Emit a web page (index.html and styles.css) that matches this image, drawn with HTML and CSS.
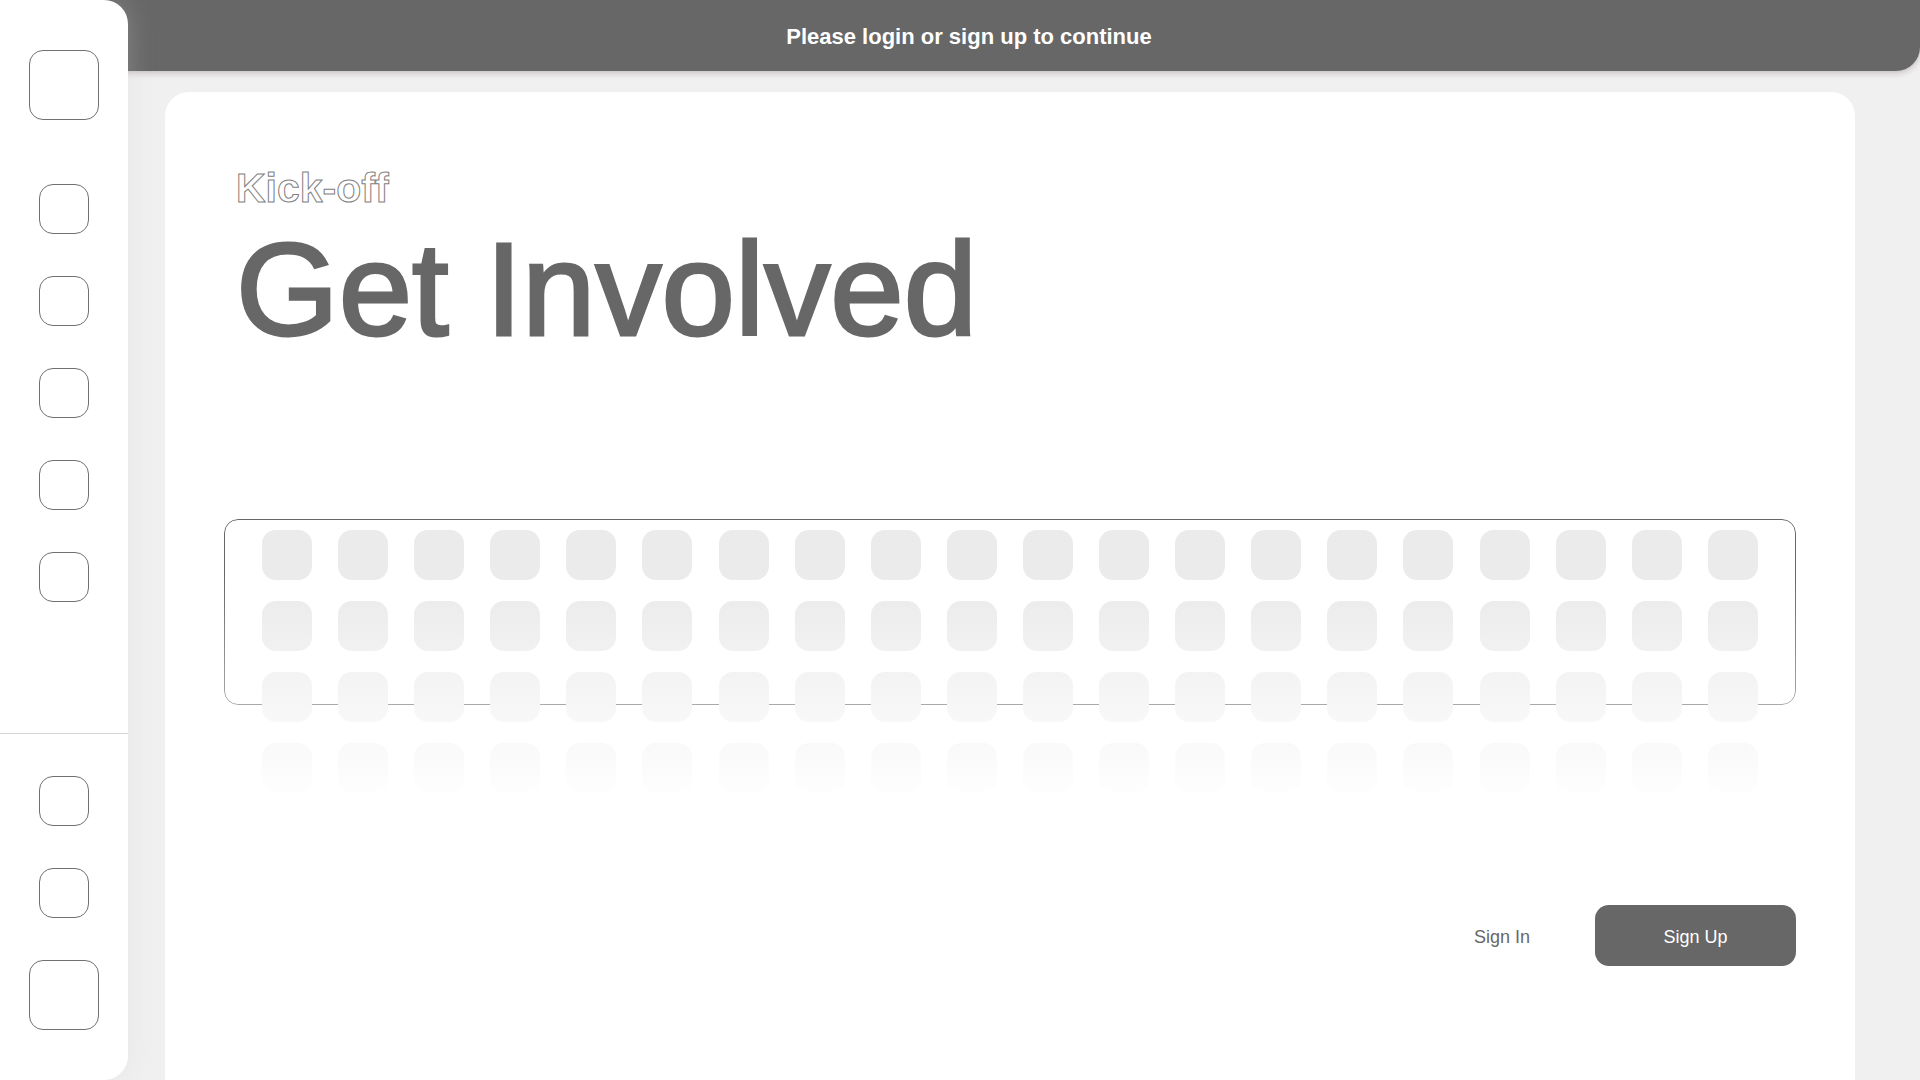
FILE: index.html
```
<!DOCTYPE html>
<html lang="en">
<head>
<meta charset="utf-8">
<meta name="viewport" content="width=device-width, initial-scale=1">
<title>Get Involved</title>
<link rel="stylesheet" href="styles.css">
</head>
<body>
<div class="layout">
  <nav class="sidebar">
    <button class="tile tile-large" type="button"></button>
    <div class="nav-group">
      <button class="tile" type="button"></button>
      <button class="tile" type="button"></button>
      <button class="tile" type="button"></button>
      <button class="tile" type="button"></button>
      <button class="tile" type="button"></button>
    </div>
    <div class="nav-group nav-footer">
      <button class="tile" type="button"></button>
      <button class="tile" type="button"></button>
      <button class="tile tile-large" type="button"></button>
    </div>
  </nav>
  <div class="content">
    <header class="banner">Please login or sign up to continue</header>
    <main class="card">
      <div class="intro">
        <p class="kicker">Kick-off</p>
        <h1 class="title">Get Involved</h1>
      </div>
      <div class="stage">
        <div class="frame"></div>
        <div class="swatches">
          <div class="row"><i></i><i></i><i></i><i></i><i></i><i></i><i></i><i></i><i></i><i></i><i></i><i></i><i></i><i></i><i></i><i></i><i></i><i></i><i></i><i></i></div>
          <div class="row row-2"><i></i><i></i><i></i><i></i><i></i><i></i><i></i><i></i><i></i><i></i><i></i><i></i><i></i><i></i><i></i><i></i><i></i><i></i><i></i><i></i></div>
          <div class="row row-3"><i></i><i></i><i></i><i></i><i></i><i></i><i></i><i></i><i></i><i></i><i></i><i></i><i></i><i></i><i></i><i></i><i></i><i></i><i></i><i></i></div>
          <div class="row row-4"><i></i><i></i><i></i><i></i><i></i><i></i><i></i><i></i><i></i><i></i><i></i><i></i><i></i><i></i><i></i><i></i><i></i><i></i><i></i><i></i></div>
        </div>
      </div>
      <div class="actions">
        <button class="btn" type="button">Sign In</button>
        <button class="btn btn-primary" type="button">Sign Up</button>
      </div>
    </main>
  </div>
</div>
</body>
</html>
```
FILE: styles.css
```
* {
  box-sizing: border-box;
}

body {
  margin: 0;
  background: #f0f0f0;
  color: #676767;
  font-family: "Liberation Sans", Arial, sans-serif;
}

button {
  padding: 0;
  font: inherit;
  color: inherit;
  cursor: pointer;
}

.layout {
  display: flex;
  min-height: 100vh;
}

/* Sidebar */

.sidebar {
  position: relative;
  z-index: 1;
  flex: none;
  display: flex;
  flex-direction: column;
  align-items: center;
  gap: 64px;
  width: 128px;
  padding: 50px 0;
  background: #fff;
  border-radius: 0 24px 24px 0;
  box-shadow: 0 0 28px rgba(210, 210, 210, 0.3);
}

.nav-group {
  display: flex;
  flex-direction: column;
  align-items: center;
  gap: 42px;
  width: 100%;
}

.nav-footer {
  margin-top: auto;
  padding-top: 42px;
  border-top: 1px solid #d8d8d8;
}

.tile {
  width: 50px;
  height: 50px;
  background: none;
  border: 1px solid #707070;
  border-radius: 14px;
}

.tile-large {
  width: 70px;
  height: 70px;
}

/* Main column; the banner runs under the sidebar's rounded corner */

.content {
  flex: 1;
  display: flex;
  flex-direction: column;
  min-width: 0;
  margin-left: -24px;
}

.banner {
  padding: 24px 86px 21px 0;
  background: #676767;
  border-radius: 0 0 24px 0;
  box-shadow: 0 2px 6px rgba(60, 30, 40, 0.24);
  color: #fff;
  font-size: 22px;
  font-weight: 700;
  line-height: 26px;
  text-align: center;
}

.card {
  flex: 1;
  margin: 21px 65px 0 61px;
  padding: 68px 59px;
  background: #fff;
  border-radius: 24px 24px 0 0;
}

.intro {
  padding-left: 12px;
}

.kicker {
  margin: 0 0 6px;
  color: #fff;
  font-size: 41px;
  font-weight: 700;
  line-height: 56px;
  -webkit-text-stroke: 1px #808080;
}

.title {
  margin: 0;
  font-size: 132px;
  font-weight: 400;
  line-height: 136px;
  -webkit-text-stroke: 3px #676767;
}

/* Frame and swatches share one cell; the swatches cover the frame's edge */

.stage {
  display: grid;
  margin-top: 161px;
  padding-bottom: 16px;
}

.frame,
.swatches {
  grid-area: 1 / 1;
}

.frame {
  height: 186px;
  border: 1px solid #676767;
  border-radius: 14px;
  -webkit-mask-image: linear-gradient(#000 30%, rgba(0, 0, 0, 0.56));
  mask-image: linear-gradient(#000 30%, rgba(0, 0, 0, 0.56));
}

.swatches {
  display: grid;
  gap: 21px;
  padding: 11px 38px 0;
  z-index: 1;
}

.row {
  display: flex;
  justify-content: space-between;
}

.row i {
  width: 50px;
  height: 50px;
  background: #ebebeb;
  border-radius: 14px;
}

.row-2 i {
  background: linear-gradient(#ececec, #f1f1f1);
}

.row-3 i {
  background: linear-gradient(#f3f3f3, #f8f8f8);
}

.row-4 i {
  background: linear-gradient(#f9f9f9, #fefefe);
}

.actions {
  display: flex;
  justify-content: flex-end;
  gap: 65px;
  margin-top: 96px;
}

.btn {
  height: 61px;
  padding-top: 3px;
  background: none;
  border: 0;
  border-radius: 14px;
  font-size: 18px;
}

.btn-primary {
  min-width: 201px;
  background: #676767;
  color: #fff;
}
```
